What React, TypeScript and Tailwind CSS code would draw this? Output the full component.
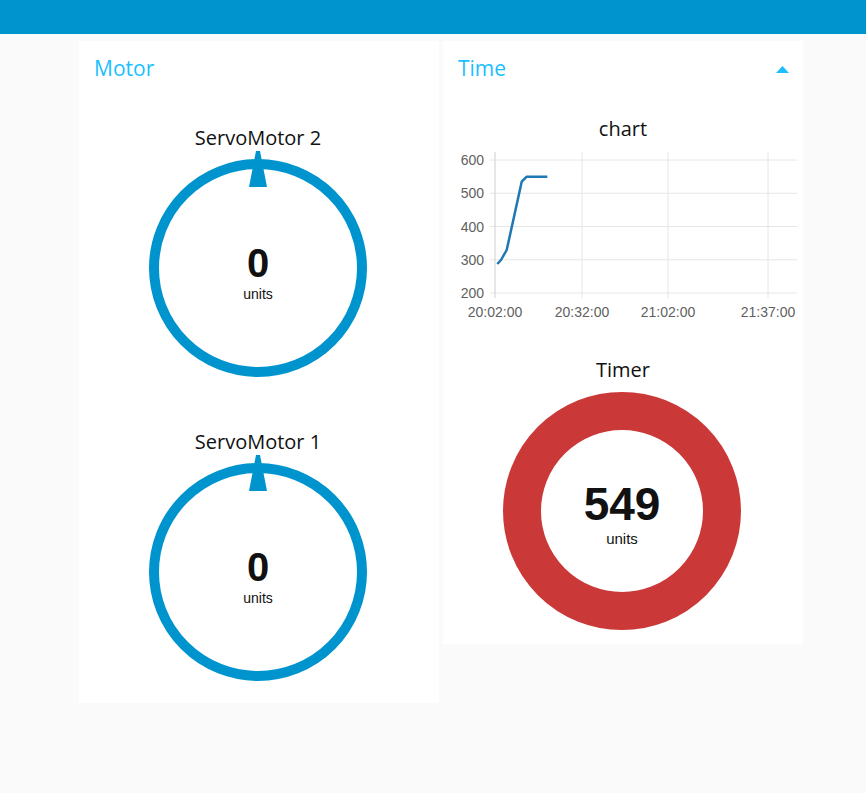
import React from "react";

const sans = "font-['Open_Sans','Noto_Sans',sans-serif]";
const arial = "font-['Liberation_Sans',Arial,sans-serif]";

function Gauge({ label, value }: { label: string; value: number }) {
  return (
    <div className="flex flex-col items-center pt-[29px] pb-[15px] pr-[2px]">
      <div className={`${sans} h-[24px] text-[20px] leading-[24px] text-[#111]`}>
        {label}
      </div>
      <div className="grid h-[236px] w-[230px]">
        <svg
          className="col-start-1 row-start-1"
          width="230"
          height="236"
          viewBox="0 0 230 236"
        >
          <circle cx="115" cy="118" r="104" fill="none" stroke="#0094ce" strokeWidth="10" />
          <polygon points="113,1 117,1 124,37 106,37" fill="#0094ce" />
        </svg>
        <div className="col-start-1 row-start-1 flex flex-col items-center self-center pt-[10px]">
          <div className={`${arial} text-[40px] font-bold leading-[42px] text-[#111]`}>
            {value}
          </div>
          <div className={`${arial} text-[14px] leading-[20px] text-[#111]`}>units</div>
        </div>
      </div>
    </div>
  );
}

function Chart() {
  const yTicks = [
    { v: "600", y: 15 },
    { v: "500", y: 48.25 },
    { v: "400", y: 81.5 },
    { v: "300", y: 114.75 },
    { v: "200", y: 148 },
  ];
  const xTicks = [
    { t: "20:02:00", x: 52 },
    { t: "20:32:00", x: 139 },
    { t: "21:02:00", x: 225 },
    { t: "21:37:00", x: 325 },
  ];
  return (
    <svg width="360" height="180" viewBox="0 0 360 180">
      {yTicks.map((t) => (
        <g key={t.v}>
          <line x1="47" x2="354" y1={t.y} y2={t.y} stroke="#e6e6e6" strokeWidth="1" />
          <text
            x="41"
            y={t.y + 5}
            textAnchor="end"
            fontSize="14"
            fill="#5f5f5f"
            fontFamily="Liberation Sans, Arial, sans-serif"
          >
            {t.v}
          </text>
        </g>
      ))}
      {xTicks.map((t, i) => (
        <g key={t.t}>
          <line
            x1={t.x}
            x2={t.x}
            y1="7"
            y2="153"
            stroke={i === 0 ? "#cfcfcf" : "#e6e6e6"}
            strokeWidth="1"
          />
          <text
            x={t.x}
            y="172"
            textAnchor="middle"
            fontSize="14"
            fill="#5f5f5f"
            fontFamily="Liberation Sans, Arial, sans-serif"
          >
            {t.t}
          </text>
        </g>
      ))}
      <polyline
        points="54.3,119 58,115 63.7,105 78.7,36.7 83.7,31.7 104.3,31.7"
        fill="none"
        stroke="#1f77b4"
        strokeWidth="2.5"
        strokeLinejoin="round"
      />
    </svg>
  );
}

export default function App() {
  return (
    <main className="min-h-[793px] bg-[#fafafa]">
      <header className="h-[34px] bg-[#0094ce]" />

      <div className="flex items-start gap-[4px] pl-[79px] pt-[7px]">
        <section className="h-[662px] w-[360px] bg-white">
          <div className={`${sans} flex h-[56px] items-center px-[15px] text-[21px] text-[#1bbfff]`}>
            Motor
          </div>
          <Gauge label="ServoMotor 2" value={0} />
          <Gauge label="ServoMotor 1" value={0} />
        </section>

        <section className="h-[603px] w-[360px] bg-white">
          <div className="flex h-[56px] items-center justify-between pl-[15px] pr-[14px]">
            <span className={`${sans} text-[21px] text-[#1bbfff]`}>Time</span>
            <svg width="13" height="7" viewBox="0 0 13 7">
              <polygon points="6.5,0 13,7 0,7" fill="#1bbfff" />
            </svg>
          </div>

          <div className="flex flex-col items-center pt-[20px]">
            <div className={`${sans} h-[24px] text-[20px] leading-[24px] text-[#111]`}>chart</div>
            <div className="mt-[4px]">
              <Chart />
            </div>
          </div>

          <div className="flex flex-col items-center pt-[33px]">
            <div className={`${sans} h-[24px] text-[20px] leading-[24px] text-[#111]`}>Timer</div>
            <div className="mt-[8px] grid h-[242px] w-[360px]">
              <svg
                className="col-start-1 row-start-1"
                width="360"
                height="242"
                viewBox="0 0 360 242"
              >
                <circle cx="179" cy="121" r="100" fill="none" stroke="#ca3838" strokeWidth="38" />
              </svg>
              <div className="col-start-1 row-start-1 flex flex-col items-center self-center pt-[8px] pr-[2px]">
                <div className={`${arial} mb-[3px] text-[46px] font-bold leading-[44px] text-[#111]`}>549</div>
                <div className={`${arial} text-[15px] leading-[20px] text-[#111]`}>units</div>
              </div>
            </div>
          </div>
        </section>
      </div>
    </main>
  );
}
